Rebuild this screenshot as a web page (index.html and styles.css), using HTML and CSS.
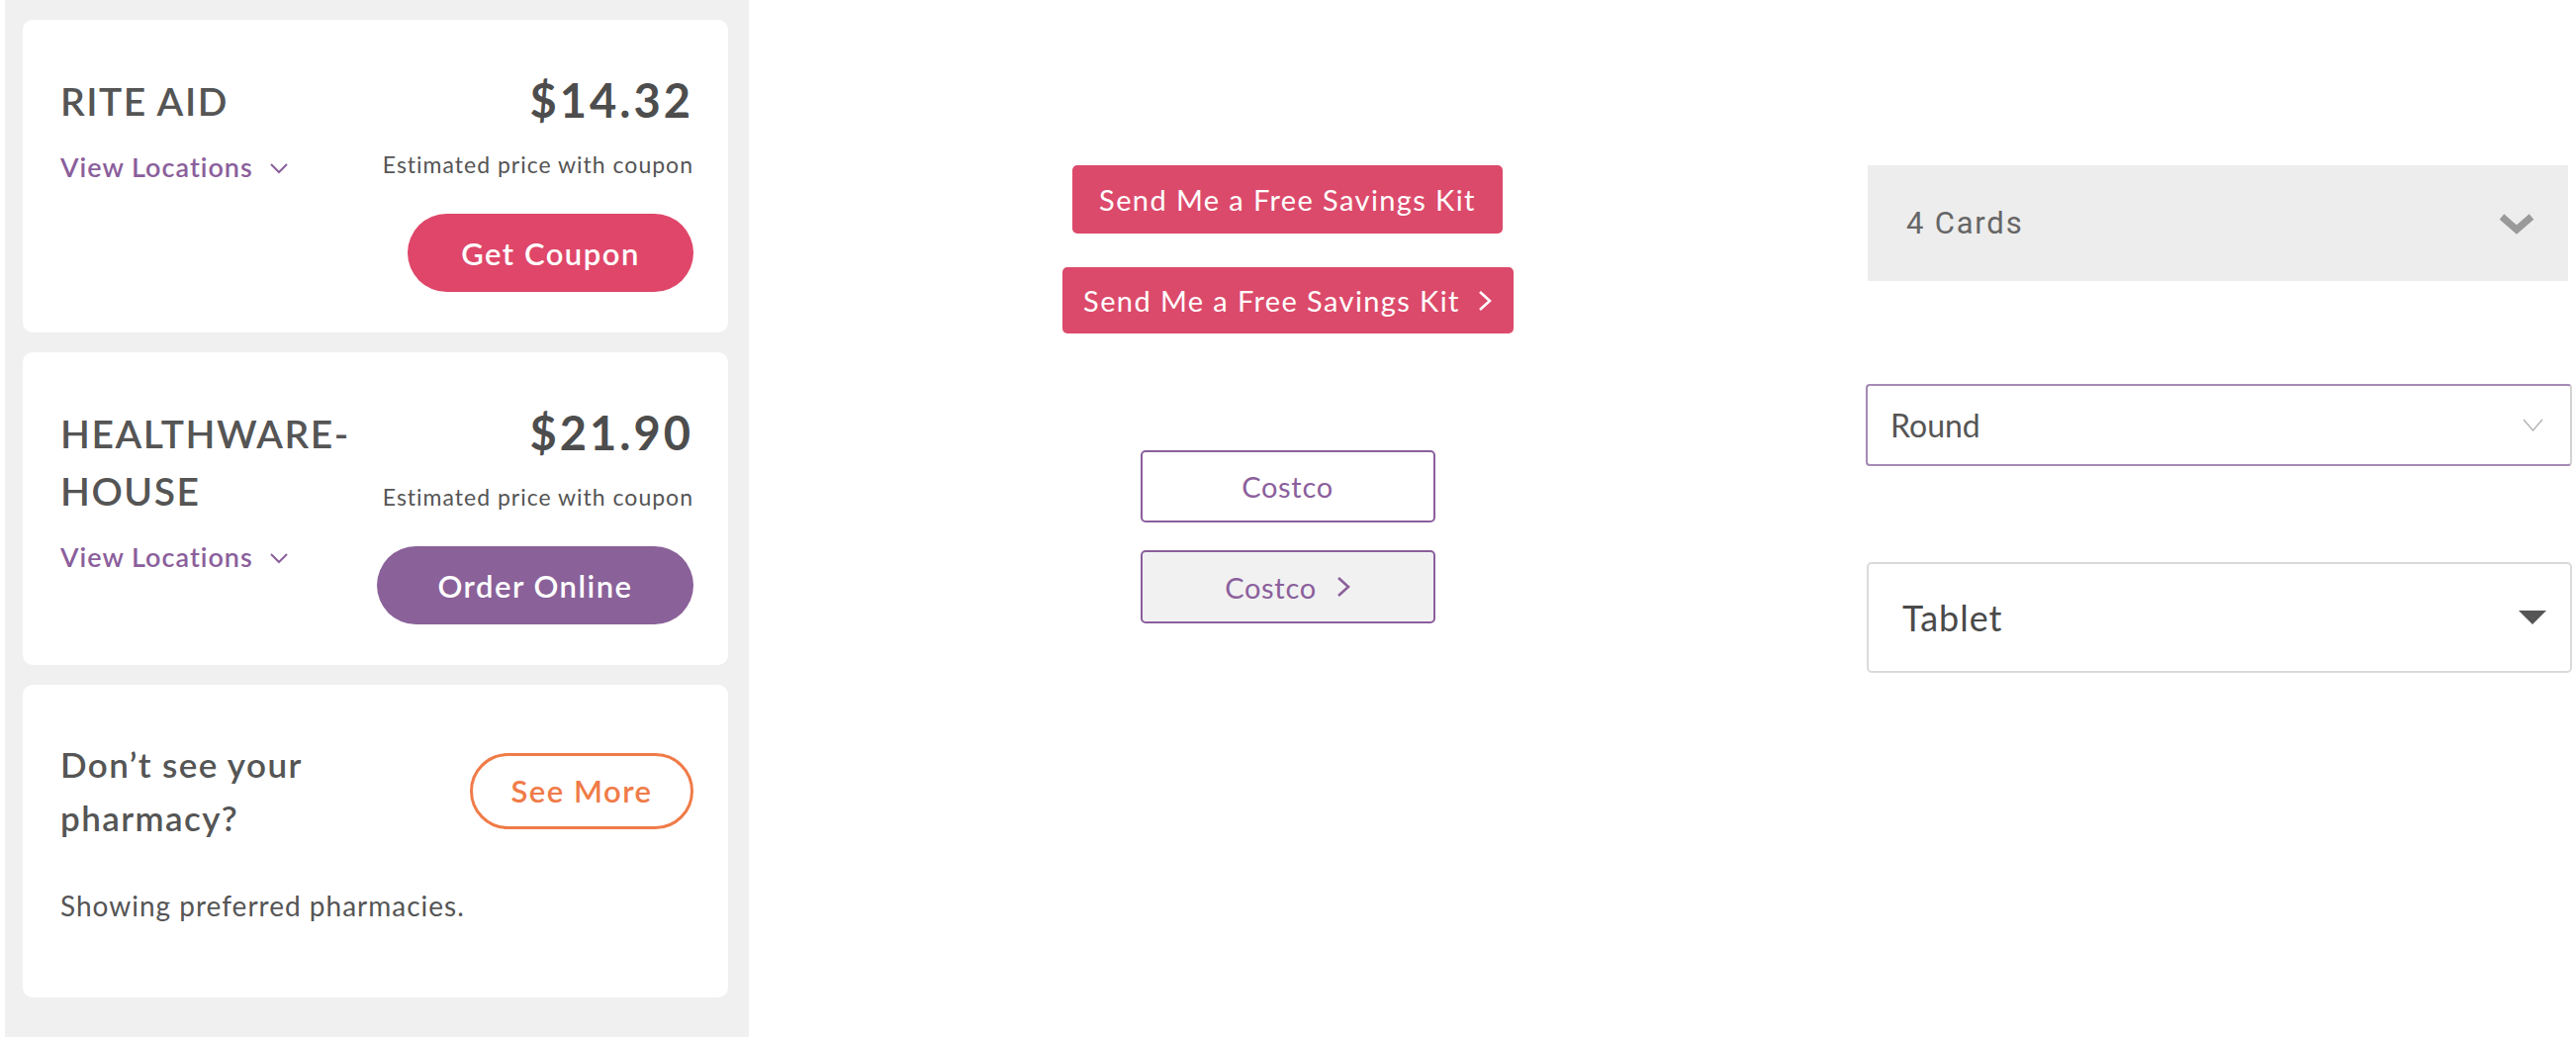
FILE: index.html
```html
<!DOCTYPE html>
<html lang="en">
<head>
    <meta charset="UTF-8">
    <meta name="viewport" content="width=device-width, initial-scale=1.0">
    <title>Pharmacy Prices</title>
    <link rel="stylesheet" href="styles.css">
</head>
<body>
    <div class="pharmacy-list">
        <div class="pharmacy-card">
            <div class="pharmacy-info">
                <h2 class="pharmacy-name">RITE AID</h2>
                <a class="view-locations" href="#">View Locations
                    <svg width="20" height="12" viewBox="0 0 20 12"><polyline points="2,2 10,10 18,2" fill="none" stroke="currentColor" stroke-width="2"/></svg>
                </a>
            </div>
            <div class="pharmacy-price">
                <div class="price">$14.32</div>
                <div class="price-note">Estimated price with coupon</div>
                <button class="pill-button coupon">Get Coupon</button>
            </div>
        </div>
        <div class="pharmacy-card">
            <div class="pharmacy-info">
                <h2 class="pharmacy-name">HEALTHWARE-HOUSE</h2>
                <a class="view-locations" href="#">View Locations
                    <svg width="20" height="12" viewBox="0 0 20 12"><polyline points="2,2 10,10 18,2" fill="none" stroke="currentColor" stroke-width="2"/></svg>
                </a>
            </div>
            <div class="pharmacy-price">
                <div class="price">$21.90</div>
                <div class="price-note">Estimated price with coupon</div>
                <button class="pill-button order">Order Online</button>
            </div>
        </div>
        <div class="pharmacy-card more-card">
            <div class="more-row">
                <h3 class="more-question">Don&rsquo;t see your pharmacy?</h3>
                <button class="pill-button see-more">See More</button>
            </div>
            <p class="more-note">Showing preferred pharmacies.</p>
        </div>
    </div>

    <div class="button-samples">
        <button class="kit-button">Send Me a Free Savings Kit</button>
        <button class="kit-button with-arrow">Send Me a Free Savings Kit
            <svg width="14" height="22" viewBox="0 0 14 22"><polyline points="2,2 12,11 2,20" fill="none" stroke="currentColor" stroke-width="2.6"/></svg>
        </button>
        <button class="store-button first">Costco</button>
        <button class="store-button active">Costco
            <svg width="14" height="22" viewBox="0 0 14 22"><polyline points="2,2 12,11 2,20" fill="none" stroke="currentColor" stroke-width="2.6"/></svg>
        </button>
    </div>

    <div class="select-samples">
        <div class="select-box cards-select">
            <span>4 Cards</span>
            <svg width="38" height="22" viewBox="0 0 38 22"><polyline points="4,4 19,17 34,4" fill="none" stroke="#9a9a9a" stroke-width="7"/></svg>
        </div>
        <div class="select-box round-select">
            <span>Round</span>
            <svg width="21" height="13" viewBox="0 0 21 13"><polyline points="1,1 10.5,12 20,1" fill="none" stroke="#b0b0b0" stroke-width="1.3"/></svg>
        </div>
        <div class="select-box tablet-select">
            <span>Tablet</span>
            <svg width="28" height="14" viewBox="0 0 28 14"><polygon points="0,0 28,0 14,14" fill="#555"/></svg>
        </div>
    </div>
</body>
</html>
```

FILE: styles.css
```css
body {
    margin: 0;
    display: flex;
    align-items: flex-start;
    background: #fff;
    font-family: Lato, "Open Sans", sans-serif;
    color: #555;
}
button {
    font-family: inherit;
    cursor: pointer;
}

/* pharmacy list */
.pharmacy-list {
    margin-left: 5px;
    width: 752px;
    height: 1048px;
    box-sizing: border-box;
    padding: 20px 21px 0 18px;
    background: #f0f0f0;
    display: flex;
    flex-direction: column;
    gap: 20px;
}
.pharmacy-card {
    height: 316px;
    box-sizing: border-box;
    padding: 53px 35px 0 38px;
    background: #fff;
    border-radius: 10px;
    display: flex;
    justify-content: space-between;
}
.pharmacy-info {
    flex: 1;
    min-width: 0;
    max-width: 310px;
}
.pharmacy-name {
    margin: 0;
    font-size: 39px;
    line-height: 58px;
    font-weight: 600;
    letter-spacing: 1.5px;
    color: #555;
}
.view-locations {
    display: flex;
    align-items: center;
    gap: 16px;
    margin-top: 21px;
    font-size: 27px;
    line-height: 34px;
    font-weight: 600;
    letter-spacing: 1px;
    color: #8b5f9c;
    text-decoration: none;
}
.view-locations svg {
    margin-top: 2px;
}
.pharmacy-price {
    display: flex;
    flex-direction: column;
    align-items: flex-end;
}
.price {
    margin-top: 3px;
    font-size: 47px;
    line-height: 50px;
    font-weight: 700;
    letter-spacing: 3px;
    color: #4d4d4d;
}
.price-note {
    margin-top: 25px;
    font-size: 23px;
    line-height: 30px;
    letter-spacing: 1px;
    color: #555;
}
.pill-button {
    height: 79px;
    margin-top: 35px;
    border: none;
    border-radius: 40px;
    font-size: 31px;
    font-weight: 600;
    letter-spacing: 1.5px;
    color: #fff;
}
.coupon {
    width: 289px;
    background: #df4669;
}
.order {
    width: 320px;
    background: #8a6199;
}

.more-card {
    display: block;
}
.more-row {
    display: flex;
    align-items: center;
    justify-content: space-between;
}
.more-question {
    margin: 0;
    max-width: 300px;
    font-size: 35px;
    line-height: 54px;
    font-weight: 600;
    letter-spacing: 1.4px;
    color: #555;
}
.see-more {
    width: 226px;
    height: 77px;
    margin: 0;
    background: #fff;
    border: 3px solid #f07b48;
    color: #f07b48;
}
.more-note {
    margin: 44px 0 0;
    font-size: 28px;
    line-height: 36px;
    letter-spacing: 1px;
    color: #555;
}

/* middle column of buttons */
.button-samples {
    flex: 1;
    padding: 167px 40px 0 0;
    display: flex;
    flex-direction: column;
    align-items: center;
}
.kit-button {
    display: flex;
    align-items: center;
    justify-content: center;
    width: 435px;
    height: 69px;
    border: none;
    border-radius: 5px;
    background: #dc4a6b;
    color: #fff;
    font-size: 29px;
    letter-spacing: 1.4px;
}
.kit-button.with-arrow {
    width: 456px;
    height: 67px;
    margin-top: 34px;
    gap: 18px;
}
.store-button {
    display: flex;
    align-items: center;
    justify-content: center;
    gap: 20px;
    width: 298px;
    height: 73px;
    border: 2px solid #8b5f9c;
    border-radius: 5px;
    background: #fff;
    color: #8b5f9c;
    font-size: 29px;
    letter-spacing: 0.7px;
}
.store-button.first {
    margin-top: 118px;
}
.store-button.active {
    height: 74px;
    margin-top: 28px;
    background: #f1f1f1;
}

/* right column of selects */
.select-samples {
    width: 714px;
    margin-right: 4px;
    padding-top: 167px;
    display: flex;
    flex-direction: column;
}
.select-box {
    display: flex;
    align-items: center;
    justify-content: space-between;
    box-sizing: border-box;
}
.cards-select {
    height: 117px;
    margin: 0 4px 0 2px;
    padding: 0 33px 0 39px;
    background: #ededed;
    font-family: Roboto, sans-serif;
    font-size: 31px;
    letter-spacing: 1.8px;
    color: #666;
}
.round-select {
    height: 83px;
    margin-top: 104px;
    padding: 0 27px 0 23px;
    border: 2px solid #a58ab5;
    border-right-color: #d2d2d2;
    border-radius: 4px;
    font-size: 32px;
    color: #555;
}
.tablet-select {
    height: 112px;
    margin-top: 97px;
    margin-left: 1px;
    padding: 0 24px 0 34px;
    border: 2px solid #dadada;
    border-radius: 5px;
    font-size: 36px;
    letter-spacing: 1px;
    color: #4a4a4a;
}
```
